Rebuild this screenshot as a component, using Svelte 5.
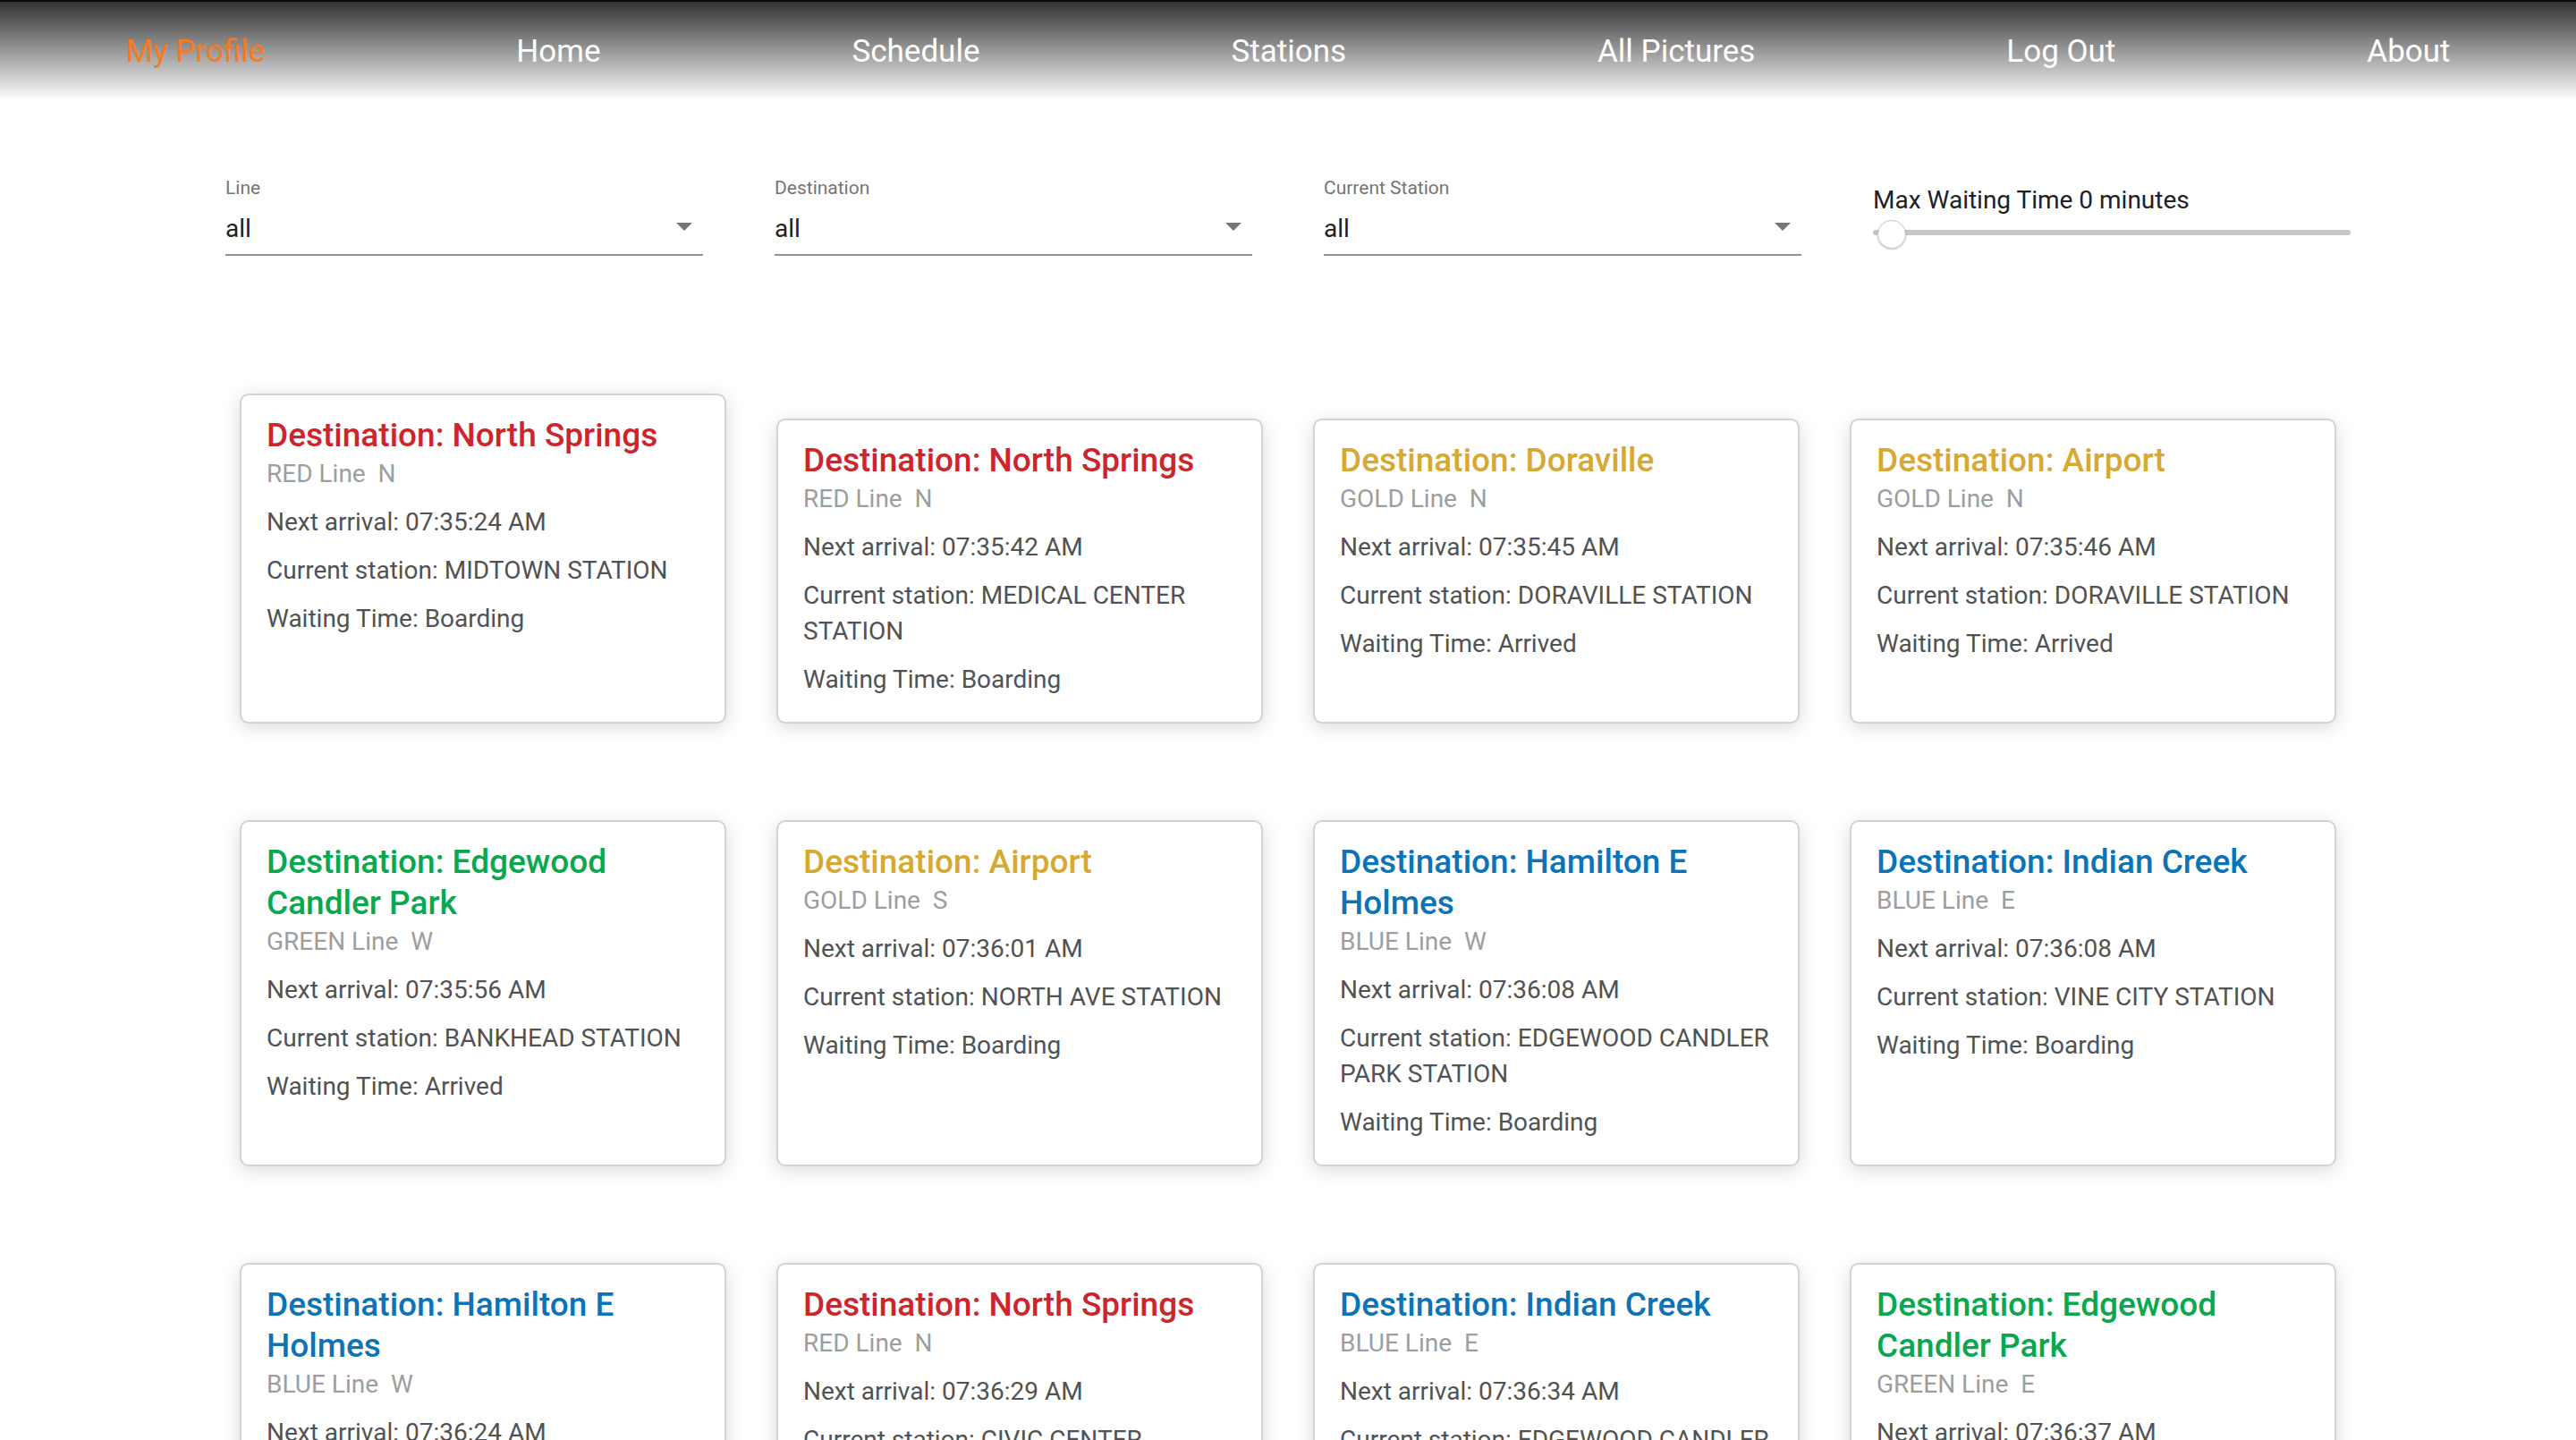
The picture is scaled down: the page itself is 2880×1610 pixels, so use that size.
<script lang="ts">
  const links = ['My Profile', 'Home', 'Schedule', 'Stations', 'All Pictures', 'Log Out', 'About'];
  const filters = [
    { id: 'line', label: 'Line' },
    { id: 'destination', label: 'Destination' },
    { id: 'station', label: 'Current Station' }
  ];
  const trains = [
    { to: 'North Springs', line: 'RED', dir: 'N', time: '07:35:24 AM', station: 'MIDTOWN STATION', wait: 'Boarding' },
    { to: 'North Springs', line: 'RED', dir: 'N', time: '07:35:42 AM', station: 'MEDICAL CENTER STATION', wait: 'Boarding' },
    { to: 'Doraville', line: 'GOLD', dir: 'N', time: '07:35:45 AM', station: 'DORAVILLE STATION', wait: 'Arrived' },
    { to: 'Airport', line: 'GOLD', dir: 'N', time: '07:35:46 AM', station: 'DORAVILLE STATION', wait: 'Arrived' },
    { to: 'Edgewood Candler Park', line: 'GREEN', dir: 'W', time: '07:35:56 AM', station: 'BANKHEAD STATION', wait: 'Arrived' },
    { to: 'Airport', line: 'GOLD', dir: 'S', time: '07:36:01 AM', station: 'NORTH AVE STATION', wait: 'Boarding' },
    { to: 'Hamilton E Holmes', line: 'BLUE', dir: 'W', time: '07:36:08 AM', station: 'EDGEWOOD CANDLER PARK STATION', wait: 'Boarding' },
    { to: 'Indian Creek', line: 'BLUE', dir: 'E', time: '07:36:08 AM', station: 'VINE CITY STATION', wait: 'Boarding' },
    { to: 'Hamilton E Holmes', line: 'BLUE', dir: 'W', time: '07:36:24 AM' },
    { to: 'North Springs', line: 'RED', dir: 'N', time: '07:36:29 AM', station: 'CIVIC CENTER STATION' },
    { to: 'Indian Creek', line: 'BLUE', dir: 'E', time: '07:36:34 AM', station: 'EDGEWOOD CANDLER PARK STATION' },
    { to: 'Edgewood Candler Park', line: 'GREEN', dir: 'E', time: '07:36:37 AM' }
  ];
  let minutes = $state(0);
</script>

<div class="page">
  <header>
    <nav aria-label="Main">
      {#each links as link, i}
        <a href="#{link.toLowerCase().replace(' ', '-')}" class:current={i === 0}>{link}</a>
      {/each}
    </nav>
  </header>

  <main>
    <form class="filters">
      {#each filters as f}
        <div class="field">
          <label class="caption" for={f.id}>{f.label}</label>
          <div class="picker">
            <select id={f.id}><option>all</option></select>
            <svg viewBox="0 0 18 10" aria-hidden="true"><path d="M0 0h18L9 9z" /></svg>
          </div>
        </div>
      {/each}
      <div class="slider">
        <label for="wait">Max Waiting Time {minutes} minutes</label>
        <input id="wait" type="range" min="0" max="60" bind:value={minutes} />
      </div>
    </form>

    <section class="cards" aria-label="Trains">
      {#each trains as t}
        <article class="card {t.line.toLowerCase()}">
          <h2>Destination: {t.to}</h2>
          <div class="meta">{t.line} Line&nbsp; {t.dir}</div>
          <p>Next arrival: {t.time}</p>
          {#if t.station}<p>Current station: {t.station}</p>{/if}
          {#if t.wait}<p>Waiting Time: {t.wait}</p>{/if}
        </article>
      {/each}
    </section>
  </main>
</div>

<style>
  :global(body) {
    margin: 0;
    background: #fff;
  }
  .page {
    height: 100vh;
    overflow: hidden;
    color: #212121;
    font: 28px/40px Roboto, 'Liberation Sans', sans-serif;
  }
  header {
    border-top: 2px solid #0c0c0c;
    background: linear-gradient(#333, #fff);
  }
  nav {
    display: flex;
    justify-content: space-around;
    padding: 32px 0 30px;
  }
  nav a {
    color: #fff;
    font-size: 35px;
    line-height: 48px;
    text-decoration: none;
  }
  nav a.current {
    color: #f47b20;
  }
  .filters {
    display: grid;
    grid-template-columns: repeat(4, 1fr);
    column-gap: 80px;
    padding: 86px 252px 0;
  }
  .field,
  .slider {
    display: flex;
    flex-direction: column;
  }
  .caption {
    color: #757575;
    font-size: 21px;
    line-height: 24px;
  }
  .picker {
    display: grid;
    align-items: center;
  }
  .picker > * {
    grid-area: 1 / 1;
  }
  select {
    appearance: none;
    width: 100%;
    height: 64px;
    margin: 0;
    padding: 6px 0 0;
    border: 0;
    border-bottom: 2px solid #949494;
    border-radius: 0;
    background: none;
    color: inherit;
    font: inherit;
  }
  .picker svg {
    justify-self: end;
    width: 18px;
    height: 10px;
    margin-right: 12px;
    fill: #757575;
    pointer-events: none;
  }
  .slider {
    padding-top: 6px;
  }
  input {
    appearance: none;
    width: 100%;
    height: 32px;
    margin: 0;
    background: none;
  }
  input::-webkit-slider-runnable-track {
    height: 6px;
    padding: 0 5px;
    border-radius: 3px;
    background: #c6c6c6;
  }
  input::-webkit-slider-thumb {
    appearance: none;
    box-sizing: border-box;
    width: 32px;
    height: 32px;
    margin-top: -11px;
    border: 1px solid #ccc;
    border-radius: 50%;
    background: #fff;
    box-shadow: 0 1px 2px rgba(0, 0, 0, 0.25);
  }
  .cards {
    display: grid;
    grid-template-columns: repeat(4, 1fr);
    gap: 108px 56px;
    padding: 154px 268px 108px;
  }
  .card {
    padding: 22px 28px 27px;
    border: 2px solid #d3d3d3;
    border-radius: 10px;
    background: #fff;
    box-shadow: 0 4px 20px rgba(0, 0, 0, 0.15);
  }
  .card:nth-child(n + 2):nth-child(-n + 4) {
    margin-top: 28px;
  }
  h2 {
    margin: 0;
    font-size: 37px;
    font-weight: 500;
    line-height: 46px;
  }
  .meta {
    color: #9e9e9e;
  }
  p {
    margin: 14px 0 0;
    color: #525252;
  }
  .red h2 {
    color: #ce242b;
  }
  .gold h2 {
    color: #d6a933;
  }
  .green h2 {
    color: #09a84e;
  }
  .blue h2 {
    color: #0b74b7;
  }
</style>
